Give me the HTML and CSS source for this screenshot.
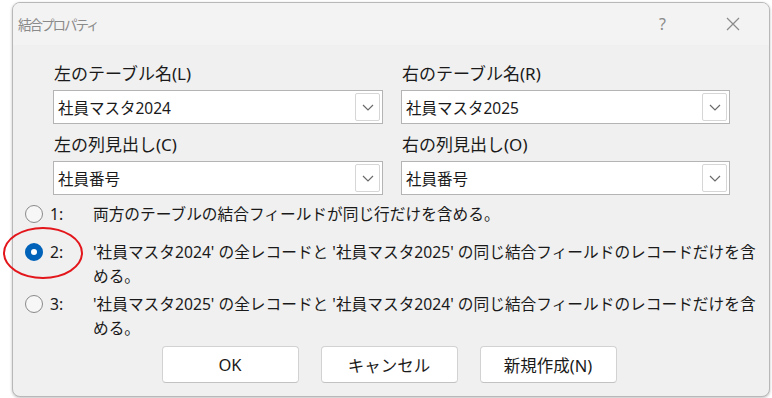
FILE: index.html
```html
<!DOCTYPE html>
<html lang="ja">
<head>
<meta charset="utf-8">
<title>結合プロパティ</title>
<link rel="stylesheet" href="styles.css">
</head>
<body>
<div class="dialog">
  <div class="titlebar">
    <span class="title">結合プロパティ</span>
    <span class="help">?</span>
    <svg class="close" width="14" height="14" viewBox="0 0 14 14"><path d="M1 1L13 13M13 1L1 13" stroke="#8a8a8a" stroke-width="1.2" fill="none"/></svg>
  </div>
  <div class="content">
    <div class="fields">
      <div class="field">
        <div class="label">左のテーブル名(L)</div>
        <div class="combo"><span class="value">社員マスタ2024</span><span class="drop"><svg width="12" height="7" viewBox="0 0 12 7"><path d="M1 1L6 6L11 1" stroke="#6a6a6a" stroke-width="1.2" fill="none"/></svg></span></div>
      </div>
      <div class="field">
        <div class="label">右のテーブル名(R)</div>
        <div class="combo"><span class="value">社員マスタ2025</span><span class="drop"><svg width="12" height="7" viewBox="0 0 12 7"><path d="M1 1L6 6L11 1" stroke="#6a6a6a" stroke-width="1.2" fill="none"/></svg></span></div>
      </div>
      <div class="field">
        <div class="label">左の列見出し(C)</div>
        <div class="combo"><span class="value">社員番号</span><span class="drop"><svg width="12" height="7" viewBox="0 0 12 7"><path d="M1 1L6 6L11 1" stroke="#6a6a6a" stroke-width="1.2" fill="none"/></svg></span></div>
      </div>
      <div class="field">
        <div class="label">右の列見出し(O)</div>
        <div class="combo"><span class="value">社員番号</span><span class="drop"><svg width="12" height="7" viewBox="0 0 12 7"><path d="M1 1L6 6L11 1" stroke="#6a6a6a" stroke-width="1.2" fill="none"/></svg></span></div>
      </div>
    </div>
    <div class="options">
      <div class="opt opt1">
        <span class="radio"></span>
        <span class="num">1:</span>
        <span class="text">両方のテーブルの結合フィールドが同じ行だけを含める。</span>
      </div>
      <div class="opt opt2">
        <span class="radio checked"></span>
        <span class="num">2:</span>
        <span class="text">'社員マスタ2024' の全レコードと '社員マスタ2025' の同じ結合フィールドのレコードだけを含<br>める。</span>
        <span class="mark"></span>
      </div>
      <div class="opt opt3">
        <span class="radio"></span>
        <span class="num">3:</span>
        <span class="text">'社員マスタ2025' の全レコードと '社員マスタ2024' の同じ結合フィールドのレコードだけを含<br>める。</span>
      </div>
    </div>
    <div class="buttons">
      <button class="btn">OK</button>
      <button class="btn">キャンセル</button>
      <button class="btn">新規作成(N)</button>
    </div>
  </div>
</div>
</body>
</html>
```
FILE: styles.css
```css
html, body {
  margin: 0;
  padding: 0;
  background: #ffffff;
}
body {
  width: 772px;
  height: 398px;
  overflow: hidden;
  font-family: "Noto Sans", "Noto Sans CJK JP", sans-serif;
  color: #1a1a1a;
}
.dialog {
  margin: 2px 0 0 12px;
  width: 758px;
  height: 395px;
  box-sizing: border-box;
  border: 1px solid #b8b8b8;
  border-radius: 8px;
  background: #f0f0f0;
  box-shadow: 0 1px 3px rgba(0,0,0,0.25);
}
.titlebar {
  height: 42px;
  background: #f3f3f3;
  border-radius: 7px 7px 0 0;
  display: flex;
  align-items: center;
  padding-left: 5px;
}
.title {
  font-size: 13.5px;
  letter-spacing: -2px;
  color: #8a8a8a;
  flex: 1;
}
.help {
  font-size: 16px;
  color: #8a8a8a;
  margin-right: 60px;
}
.close {
  margin-right: 29px;
}
.content {
  padding: 17px 0 0 0;
}
.fields {
  display: grid;
  grid-template-columns: 330px 329px;
  column-gap: 18px;
  row-gap: 9px;
  padding-left: 40px;
}
.label {
  font-size: 17px;
  line-height: 24px;
  margin-bottom: 4px;
  padding-left: 1px;
}
.combo {
  height: 34px;
  box-sizing: border-box;
  border: 1px solid #b4b4b4;
  background: #ffffff;
  display: flex;
  align-items: center;
  justify-content: space-between;
  padding: 2px 2px 2px 4px;
}
.value {
  font-size: 15.5px;
}
.drop {
  width: 25px;
  height: 28px;
  box-sizing: border-box;
  border: 1px solid #d6d6d6;
  border-radius: 2px;
  display: flex;
  align-items: center;
  justify-content: center;
}
.options {
  margin-top: 7px;
  display: flex;
  flex-direction: column;
}
.opt {
  position: relative;
  display: grid;
  grid-template-columns: 18px 36px 1fr;
  column-gap: 7px;
  padding-left: 12px;
  font-size: 15.7px;
  line-height: 24px;
  align-items: start;
}
.opt2 { margin-top: 14px; }
.opt3 { margin-top: 4px; }
.radio {
  width: 18px;
  height: 18px;
  box-sizing: border-box;
  border: 1.5px solid #8a8a8a;
  border-radius: 50%;
  background: #f7f7f7;
  margin-top: 3px;
}
.radio.checked {
  border: 6px solid #0062b8;
  background: #ffffff;
}
.num {
  white-space: nowrap;
}
.text {
  white-space: nowrap;
}
.mark {
  position: absolute;
  left: -10px;
  top: -13px;
  width: 80px;
  height: 52px;
  box-sizing: border-box;
  border: 2.5px solid #e3161c;
  border-radius: 50%;
}
.buttons {
  display: flex;
  justify-content: center;
  gap: 22px;
  margin-top: 6px;
  padding-right: 4px;
}
.btn {
  width: 137px;
  height: 37px;
  background: #ffffff;
  border: 1px solid #d2d2d2;
  border-bottom-color: #c2c2c2;
  border-radius: 4px;
  font-family: "Noto Sans", "Noto Sans CJK JP", sans-serif;
  font-size: 16.5px;
  color: #1a1a1a;
  padding: 0;
}
```
